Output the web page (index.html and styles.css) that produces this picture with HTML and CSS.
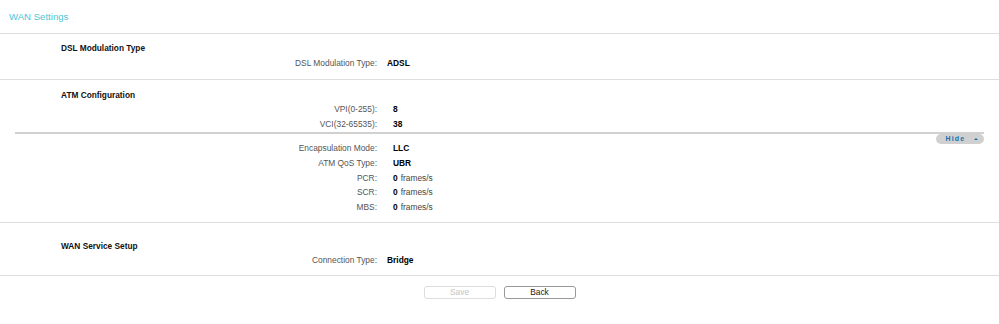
FILE: index.html
```html
<!DOCTYPE html>
<html lang="en">
<head>
    <meta charset="UTF-8">
    <title>WAN Settings</title>
    <link rel="stylesheet" href="styles.css">
</head>
<body>

<div class="page-title">WAN Settings</div>

<div class="section sec-dsl">
    <h3>DSL Modulation Type</h3>
    <div class="row">
        <span class="label">DSL Modulation Type:</span>
        <span class="value">ADSL</span>
    </div>
</div>

<div class="section sec-atm">
    <h3>ATM Configuration</h3>
    <div class="row wide">
        <span class="label">VPI(0-255):</span>
        <span class="value">8</span>
    </div>
    <div class="row wide">
        <span class="label">VCI(32-65535):</span>
        <span class="value">38</span>
    </div>

    <div class="advanced-line">
        <button class="hide-button" id="hideButton">Hide <span class="arrow"></span></button>
    </div>

    <div class="advanced" id="advanced">
        <div class="row wide">
            <span class="label">Encapsulation Mode:</span>
            <span class="value">LLC</span>
        </div>
        <div class="row wide">
            <span class="label">ATM QoS Type:</span>
            <span class="value">UBR</span>
        </div>
        <div class="row wide">
            <span class="label">PCR:</span>
            <span class="value">0</span> <span class="unit">frames/s</span>
        </div>
        <div class="row wide">
            <span class="label">SCR:</span>
            <span class="value">0</span> <span class="unit">frames/s</span>
        </div>
        <div class="row wide">
            <span class="label">MBS:</span>
            <span class="value">0</span> <span class="unit">frames/s</span>
        </div>
    </div>
</div>

<div class="section sec-wan">
    <h3>WAN Service Setup</h3>
    <div class="row">
        <span class="label">Connection Type:</span>
        <span class="value">Bridge</span>
    </div>
</div>

<div class="buttons">
    <button class="btn" disabled>Save</button>
    <button class="btn">Back</button>
</div>

</body>
</html>
```

FILE: styles.css
```css
body {
    font-family: "Liberation Sans", Arial, sans-serif;
    font-size: 8.4px;
    color: #333;
    background-color: #fff;
    margin: 0;
}

.page-title {
    height: 33px;
    line-height: 33px;
    padding-left: 9px;
    font-size: 9.6px;
    color: #4bc6d6;
    border-bottom: 1px solid #dedede;
}

.section {
    border-bottom: 1px solid #dedede;
}
.sec-dsl {
    padding: 7px 0 8px;
}
.sec-atm {
    padding: 8px 0 7px;
}
.sec-wan {
    padding: 16px 0 7px;
}

h3 {
    margin: 0;
    padding-left: 61px;
    font-size: 8.3px;
    line-height: 14px;
    color: #111;
}
.sec-dsl h3 {
    line-height: 15px;
}

.row {
    display: flex;
    line-height: 15px;
    white-space: nowrap;
}
.label {
    width: 377px;
    text-align: right;
    color: #555;
}
.value {
    margin-left: 10px;
    font-weight: bold;
    color: #000;
}
.row.wide .value {
    margin-left: 16px;
}
.unit {
    margin-left: 3px;
    color: #444;
}

.advanced-line {
    position: relative;
    margin: 0 15px 7px;
    border-top: 2px solid #d0d0d0;
}
.advanced .row {
    line-height: 14.75px;
}

/* toggle sits under the divider, right side */
.hide-button {
    position: absolute;
    right: 0;
    top: 0;
    width: 48px;
    height: 10px;
    padding: 0 0 0 3px;
    border: none;
    border-radius: 5px;
    background-color: #d0d0d0;
    color: #1a6fae;
    font-family: "Liberation Sans", Arial, sans-serif;
    font-size: 7px;
    font-weight: bold;
    letter-spacing: 1.2px;
    line-height: 10px;
    cursor: pointer;
}
.hide-button .arrow {
    display: inline-block;
    width: 0;
    height: 0;
    margin-left: 5px;
    vertical-align: 1px;
    border-left: 2px solid transparent;
    border-right: 2px solid transparent;
    border-bottom: 2px solid #1a6fae;
}

.buttons {
    display: flex;
    justify-content: center;
    gap: 8px;
    margin-top: 10px;
}
.btn {
    width: 72px;
    height: 13px;
    padding: 0;
    background-color: #fff;
    border: 1px solid #999;
    border-radius: 3px;
    font-family: "Liberation Sans", Arial, sans-serif;
    font-size: 8.4px;
    color: #222;
}
.btn:disabled {
    border-color: #ddd;
    color: #c4c4c4;
}
```
